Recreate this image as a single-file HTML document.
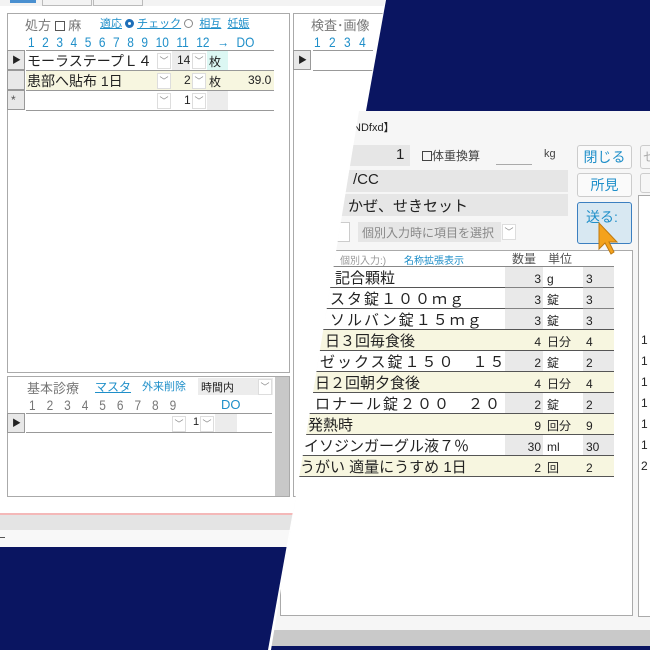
<!DOCTYPE html>
<html><head><meta charset="utf-8"><style>
*{box-sizing:border-box;margin:0;padding:0}
body{width:650px;height:650px;overflow:hidden;position:relative;background:#fff;font-family:"Liberation Sans","Noto Sans CJK JP",sans-serif;color:#222}
.a{position:absolute}
.t{position:absolute;white-space:nowrap}
.blue{color:#1f8fc9}
.gray{color:#777}
.sel{position:absolute;left:7px;width:18px;height:20px;background:#e8e8e8;border:1px solid #999}
.dd{position:absolute;width:14px;height:16px;background:#fff;border:1px solid #ddd;font-size:9px;color:#888;text-align:center;line-height:14px}
.nm{position:absolute;top:0;width:225px;height:21px;overflow:hidden}
</style></head><body>
<div class="a" style="left:0;top:0;width:650px;height:650px;clip-path:polygon(0 0,385px 0,268px 650px,0 650px)">
  <div class="a" style="left:0;top:0;width:650px;height:6px;background:#f3f3f3"></div>
  <div class="a" style="left:10px;top:0;width:26px;height:3px;background:#4a90d0"></div>
  <div class="a" style="left:42px;top:0;width:50px;height:6px;border:1px solid #bbb;border-top:0"></div>
  <div class="a" style="left:93px;top:0;width:50px;height:6px;border:1px solid #bbb;border-top:0"></div>
  <div class="a" style="left:7px;top:13px;width:283px;height:360px;border:1px solid #aaa;background:#fff"></div>
  <div class="t gray" style="left:25px;top:15px;font-size:13px">処方 <span style="display:inline-block;width:10px;height:10px;border:1px solid #555;vertical-align:-1px"></span> 麻</div>
  <div class="t blue" style="left:100px;top:15px;font-size:11px"><u>適応</u> <span style="display:inline-block;width:9px;height:9px;border:3px solid #1f6fb9;border-radius:50%;vertical-align:-1px"></span> <u>チェック</u> <span style="display:inline-block;width:9px;height:9px;border:1px solid #888;border-radius:50%;vertical-align:-1px"></span> &nbsp;<u>相互</u> &nbsp;<u>妊娠</u></div>
  <div class="t blue" style="left:28px;top:34px;font-size:14px;transform:scaleX(0.85);transform-origin:left;word-spacing:5px">1 2 3 4 5 6 7 8 9 10 11 12 → DO</div>
  <div class="a" style="left:26px;top:50px;width:248px;height:1px;background:#999"></div>
  <div class="sel" style="top:50px;font-size:9px;padding-left:4px;line-height:18px">▶</div>
  <div class="t" style="left:27px;top:51px;font-size:14px">モーラステープＬ４</div>
  <div class="dd" style="left:157px;top:53px">﹀</div>
  <div class="a" style="left:172px;top:51px;width:18px;height:19px;background:#ececec"></div>
  <div class="t" style="left:177px;top:53px;font-size:12px">14</div>
  <div class="dd" style="left:192px;top:53px">﹀</div>
  <div class="a" style="left:207px;top:51px;width:21px;height:19px;background:#dcf7f3"></div>
  <div class="t" style="left:209px;top:53px;font-size:12px">枚</div>
  <div class="a" style="left:26px;top:70px;width:248px;height:1px;background:#999"></div>
  <div class="sel" style="top:70px"></div>
  <div class="a" style="left:26px;top:71px;width:248px;height:19px;background:#f7f6e0"></div>
  <div class="t" style="left:27px;top:71px;font-size:14px">患部へ貼布 1日</div>
  <div class="dd" style="left:157px;top:73px">﹀</div>
  <div class="t" style="left:184px;top:73px;font-size:12px">2</div>
  <div class="dd" style="left:192px;top:73px">﹀</div>
  <div class="t" style="left:209px;top:73px;font-size:12px">枚</div>
  <div class="t" style="left:248px;top:73px;font-size:12px">39.0</div>
  <div class="a" style="left:26px;top:90px;width:248px;height:1px;background:#999"></div>
  <div class="sel" style="top:90px;font-size:12px;padding-left:3px;line-height:18px;color:#555">*</div>
  <div class="dd" style="left:157px;top:93px">﹀</div>
  <div class="t" style="left:184px;top:93px;font-size:12px">1</div>
  <div class="dd" style="left:192px;top:93px">﹀</div>
  <div class="a" style="left:207px;top:91px;width:21px;height:19px;background:#ececec"></div>
  <div class="a" style="left:26px;top:110px;width:248px;height:1px;background:#999"></div>
  <div class="a" style="left:7px;top:376px;width:283px;height:121px;border:1px solid #aaa;background:#fff"></div>
  <div class="a" style="left:275px;top:377px;width:14px;height:119px;background:#c8c8c8"></div>
  <div class="t gray" style="left:27px;top:378px;font-size:13px">基本診療</div>
  <div class="t blue" style="left:95px;top:378px;font-size:12px"><u>マスタ</u></div>
  <div class="t blue" style="left:142px;top:378px;font-size:11px">外来削除</div>
  <div class="a" style="left:198px;top:378px;width:75px;height:17px;background:#ececec"></div>
  <div class="t" style="left:201px;top:379px;font-size:11px">時間内</div>
  <div class="dd" style="left:258px;top:379px">﹀</div>
  <div class="t gray" style="left:29px;top:397px;font-size:14px;transform:scaleX(0.85);transform-origin:left;word-spacing:9px">1 2 3 4 5 6 7 8 9</div>
  <div class="t blue" style="left:221px;top:397px;font-size:13px">DO</div>
  <div class="a" style="left:26px;top:413px;width:246px;height:1px;background:#999"></div>
  <div class="sel" style="top:413px;font-size:9px;padding-left:4px;line-height:18px">▶</div>
  <div class="dd" style="left:172px;top:416px">﹀</div>
  <div class="t" style="left:193px;top:416px;font-size:11px">1</div>
  <div class="dd" style="left:200px;top:416px">﹀</div>
  <div class="a" style="left:215px;top:414px;width:22px;height:18px;background:#ececec"></div>
  <div class="a" style="left:26px;top:432px;width:246px;height:1px;background:#999"></div>
  <div class="a" style="left:293px;top:13px;width:120px;height:484px;border:1px solid #aaa;background:#fff"></div>
  <div class="t gray" style="left:311px;top:15px;font-size:13px">検査･画像</div>
  <div class="t blue" style="left:314px;top:34px;font-size:14px;transform:scaleX(0.85);transform-origin:left;word-spacing:6px">1 2 3 4</div>
  <div class="a" style="left:313px;top:50px;width:60px;height:1px;background:#999"></div>
  <div class="sel" style="left:293px;top:50px;font-size:9px;padding-left:4px;line-height:18px">▶</div>
  <div class="a" style="left:313px;top:70px;width:60px;height:1px;background:#999"></div>
  <div class="a" style="left:0;top:513px;width:400px;height:2px;background:#f4b8b8"></div>
  <div class="a" style="left:0;top:515px;width:400px;height:15px;background:#e4e4e4"></div>
  <div class="a" style="left:0;top:530px;width:400px;height:17px;background:#f8f8f8"></div>
  <div class="a" style="left:0;top:537px;width:5px;height:1px;background:#555"></div>
  <div class="a" style="left:0;top:547px;width:400px;height:110px;background:#0a1561"></div>
</div>
<div class="a" style="left:0;top:0;width:650px;height:650px;background:#0a1561;clip-path:polygon(386px 0,650px 0,650px 111px,366px 111px)"></div>
<div class="a" style="left:0;top:0;width:650px;height:650px;clip-path:polygon(359px 111px,650px 111px,650px 650px,271px 650px)">
  <div class="a" style="left:0;top:111px;width:650px;height:539px;background:#f6f6f6"></div>
  <div class="a" style="left:0;top:630px;width:650px;height:16px;background:#c9c9c9"></div>
  <div class="a" style="left:0;top:646px;width:650px;height:6px;background:#0a1561"></div>
  <div class="t" style="left:353px;top:119px;font-size:11px">NDfxd】</div>
  <div class="a" style="left:300px;top:145px;width:110px;height:21px;background:#e6e6e6"></div>
  <div class="t" style="left:396px;top:146px;font-size:15px">1</div>
  <div class="t" style="left:422px;top:147px;font-size:12px;color:#444"><span style="display:inline-block;width:10px;height:10px;border:1px solid #444;vertical-align:-1px"></span>体重換算</div>
  <div class="a" style="left:496px;top:164px;width:36px;height:1px;background:#aaa"></div>
  <div class="t" style="left:544px;top:148px;font-size:11px;color:#444">kg</div>
  <div class="a" style="left:300px;top:170px;width:268px;height:22px;background:#e6e6e6"></div>
  <div class="t" style="left:353px;top:171px;font-size:15px">/CC</div>
  <div class="a" style="left:300px;top:194px;width:268px;height:22px;background:#e6e6e6"></div>
  <div class="t" style="left:348px;top:195px;font-size:15px">かぜ、せきセット</div>
  <div class="a" style="left:300px;top:222px;width:50px;height:20px;background:#fff;border:1px solid #ccc"></div>
  <div class="a" style="left:358px;top:222px;width:143px;height:20px;background:#e6e6e6"></div>
  <div class="t" style="left:362px;top:224px;font-size:12px;color:#888">個別入力時に項目を選択</div>
  <div class="dd" style="left:502px;top:224px">﹀</div>
  <div class="a" style="left:577px;top:145px;width:55px;height:24px;border:1px solid #ccc;border-radius:3px;background:#fafafa;font-size:14px;color:#1f8fc9;text-align:center;line-height:22px">閉じる</div>
  <div class="a" style="left:577px;top:173px;width:55px;height:24px;border:1px solid #ccc;border-radius:3px;background:#fafafa;font-size:14px;color:#1f8fc9;text-align:center;line-height:22px">所見</div>
  <div class="a" style="left:577px;top:202px;width:55px;height:42px;border:1px solid #3b7fc0;border-radius:3px;background:#d8e8f2;font-size:14px;color:#1f8fc9;padding:4px 0 0 8px">送る:</div>
  <div class="a" style="left:640px;top:145px;width:14px;height:24px;border:1px solid #ccc;border-radius:3px"></div>
  <div class="t" style="left:643px;top:148px;font-size:12px;color:#aaa">セ</div>
  <div class="a" style="left:640px;top:173px;width:14px;height:20px;border:1px solid #ccc;border-radius:3px"></div>
  <div class="a" style="left:280px;top:250px;width:353px;height:366px;background:#fff;border:1px solid #aaa"></div>
  <div class="t" style="left:340px;top:252px;font-size:10px;color:#999">個別入力:)</div>
  <div class="t blue" style="left:404px;top:252px;font-size:10px">名称拡張表示</div>
  <div class="t" style="left:512px;top:250px;font-size:12px;color:#555">数量</div>
  <div class="t" style="left:548px;top:250px;font-size:12px;color:#555">単位</div>
  <div class="a" style="left:280px;top:266px;width:334px;height:1px;background:#888"></div>
  <div class="a" style="left:280px;top:267px;width:334px;height:210px;font-size:15px">
    <div class="a" style="left:0;top:0;width:334px;height:21px;border-bottom:1px solid #555"><div class="nm"><div class="t" style="left:55px;top:0">記合顆粒</div></div></div>
    <div class="a" style="left:0;top:21px;width:334px;height:21px;border-bottom:1px solid #555"><div class="nm"><div class="t" style="left:50px;top:0;letter-spacing:2px">スタ錠１００ｍｇ</div></div></div>
    <div class="a" style="left:0;top:42px;width:334px;height:21px;border-bottom:1px solid #555"><div class="nm"><div class="t" style="left:50px;top:0;letter-spacing:2px">ソルバン錠１５ｍｇ</div></div></div>
    <div class="a" style="left:0;top:63px;width:334px;height:21px;background:#f7f6e0;border-bottom:1px solid #555"><div class="nm"><div class="t" style="left:45px;top:0">日３回毎食後</div></div></div>
    <div class="a" style="left:0;top:84px;width:334px;height:21px;border-bottom:1px solid #555"><div class="nm"><div class="t" style="left:40px;top:0;letter-spacing:2px">ゼックス錠１５０　１５０r</div></div></div>
    <div class="a" style="left:0;top:105px;width:334px;height:21px;background:#f7f6e0;border-bottom:1px solid #555"><div class="nm"><div class="t" style="left:35px;top:0">日２回朝夕食後</div></div></div>
    <div class="a" style="left:0;top:126px;width:334px;height:21px;border-bottom:1px solid #555"><div class="nm"><div class="t" style="left:35px;top:0;letter-spacing:2px">ロナール錠２００　２００r</div></div></div>
    <div class="a" style="left:0;top:147px;width:334px;height:21px;background:#f7f6e0;border-bottom:1px solid #555"><div class="nm"><div class="t" style="left:28px;top:0">発熱時</div></div></div>
    <div class="a" style="left:0;top:168px;width:334px;height:21px;border-bottom:1px solid #555"><div class="nm"><div class="t" style="left:24px;top:0">イソジンガーグル液７％</div></div></div>
    <div class="a" style="left:0;top:189px;width:334px;height:21px;background:#f7f6e0;border-bottom:1px solid #555"><div class="nm"><div class="t" style="left:20px;top:0">うがい 適量にうすめ 1日</div></div></div>
    <div class="a" style="left:225px;top:0;width:38px;height:62px;background:rgba(200,200,200,.4)"></div>
    <div class="a" style="left:303px;top:0;width:31px;height:62px;background:rgba(200,200,200,.4)"></div>
    <div class="a" style="left:225px;top:84px;width:38px;height:20px;background:rgba(200,200,200,.4)"></div>
    <div class="a" style="left:303px;top:84px;width:31px;height:20px;background:rgba(200,200,200,.4)"></div>
    <div class="a" style="left:225px;top:126px;width:38px;height:20px;background:rgba(200,200,200,.4)"></div>
    <div class="a" style="left:303px;top:126px;width:31px;height:20px;background:rgba(200,200,200,.4)"></div>
    <div class="a" style="left:225px;top:168px;width:38px;height:20px;background:rgba(200,200,200,.4)"></div>
    <div class="a" style="left:303px;top:168px;width:31px;height:20px;background:rgba(200,200,200,.4)"></div>
    <div class="a" style="left:225px;top:2px;width:36px;font-size:12px;line-height:21px;text-align:right">3<br>3<br>3<br>4<br>2<br>4<br>2<br>9<br>30<br>2</div>
    <div class="a" style="left:267px;top:2px;font-size:12px;line-height:21px">g<br>錠<br>錠<br>日分<br>錠<br>日分<br>錠<br>回分<br>ml<br>回</div>
    <div class="a" style="left:306px;top:2px;font-size:12px;line-height:21px">3<br>3<br>3<br>4<br>2<br>4<br>2<br>9<br>30<br>2</div>
  </div>
  <div class="a" style="left:638px;top:195px;width:14px;height:422px;background:#fff;border:1px solid #aaa"></div>
  <div class="a" style="left:641px;top:330px;font-size:12px;line-height:21px">1<br>1<br>1<br>1<br>1<br>1<br>2</div>
  <svg class="a" style="left:597px;top:222px" width="22" height="34" viewBox="0 0 22 34"><path d="M2 1 L2 27 L8 21 L14 32 L17 30 L12 20 L20 20 Z" fill="#f4a21c" stroke="#c07a10" stroke-width="1"/></svg>
</div>
</body></html>
